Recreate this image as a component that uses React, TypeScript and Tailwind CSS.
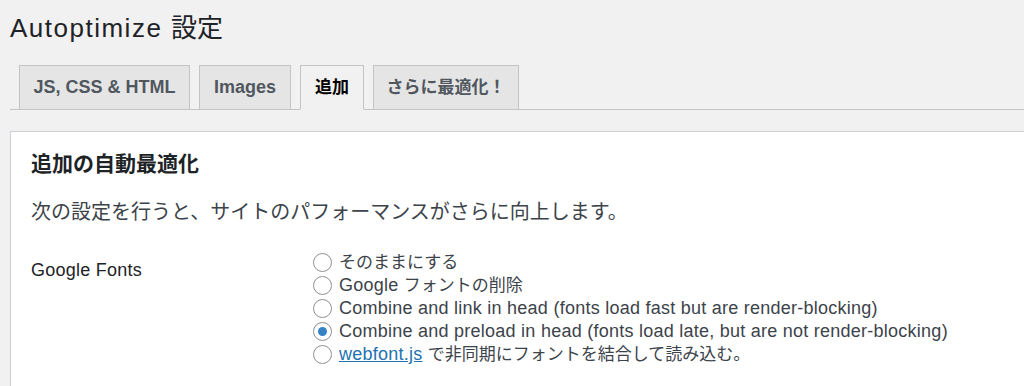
import React from "react";

const font = "font-['Liberation_Sans','Noto_Sans_CJK_JP',sans-serif]";

// Japanese runs are set a touch smaller than the Latin text, like the original
const J = ({ children }: { children: React.ReactNode }) => (
  <span className="text-[17px] tracking-normal">{children}</span>
);

const tabs = [
  { label: "JS, CSS & HTML", active: false, w: "w-[171px]" },
  { label: "Images", active: false, w: "w-[92px]" },
  { label: <J>追加</J>, active: true, w: "w-[64px]" },
  { label: <J>さらに最適化！</J>, active: false, w: "w-[146px]" },
];

const options = [
  { label: <J>そのままにする</J>, checked: false },
  { label: <>Google <J>フォントの削除</J></>, checked: false },
  { label: <>Combine and link in head (fonts load fast but are render-blocking)</>, checked: false },
  { label: <>Combine and preload in head (fonts load late, but are not render-blocking)</>, checked: true },
  {
    label: (
      <>
        <a href="#" className="text-[#2271b1] underline">webfont.js</a> <J>で非同期にフォントを結合して読み込む。</J>
      </>
    ),
    checked: false,
  },
];

const Radio = ({ checked }: { checked: boolean }) => (
  <span className="flex h-[19px] w-[19px] shrink-0 items-center justify-center rounded-full border border-[#8c8f94] bg-white">
    {checked && <span className="h-[9px] w-[9px] rounded-full bg-[#3582c4]" />}
  </span>
);

export default function App() {
  return (
    <div className={`h-[386px] overflow-hidden bg-[#f1f1f1] pl-[10px] text-[#3c434a] ${font}`}>
      {/* Title */}
      <h1 className="pt-[13px] text-[26px] leading-[30px] tracking-[1.5px] text-[#1d2327]">
        Autoptimize <span className="tracking-normal">設定</span>
      </h1>

      {/* Tabs */}
      <nav className="mt-[22px] flex gap-[9px] border-b border-[#c3c4c7] pl-[9px]">
        {tabs.map((t, i) => (
          <div
            key={i}
            className={`${t.w} -mb-px flex h-[45px] items-center justify-center border border-[#c3c4c7] text-[18px] font-bold ${
              t.active
                ? "border-b-[#f1f1f1] bg-[#f1f1f1] text-[#000]"
                : "bg-[#e5e5e5] text-[#50575e]"
            }`}
          >
            {t.label}
          </div>
        ))}
      </nav>

      {/* Panel */}
      <div className="mt-[21px] h-[300px] border border-r-0 border-[#ccd0d4] bg-white pl-[20px] pt-[19px]">
        <h2 className="text-[21px] font-bold leading-[26px] text-[#1d2327]">追加の自動最適化</h2>
        <p className="mt-[22px] text-[20px] leading-[26px]">
          次の設定を行うと、サイトのパフォーマンスがさらに向上します。
        </p>

        <div className="mt-[26px] flex">
          <div className="w-[282px] pt-[8px] text-[18px] leading-[23px] tracking-[0.25px] text-[#1d2327]">
            Google Fonts
          </div>
          <div className="flex flex-col">
            {options.map((o, i) => (
              <label
                key={i}
                className="flex h-[23px] items-center gap-[7px] text-[18px] leading-[23px] tracking-[0.25px]"
              >
                <Radio checked={o.checked} />
                <span>{o.label}</span>
              </label>
            ))}
          </div>
        </div>
      </div>
    </div>
  );
}
